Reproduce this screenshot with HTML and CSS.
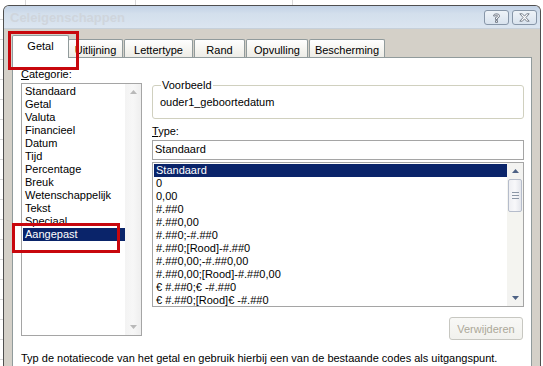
FILE: index.html
```html
<!DOCTYPE html>
<html>
<head>
<meta charset="utf-8">
<link rel="stylesheet" href="styles.css">
</head>
<body>
<div class="desk">
  <div class="win">
    <div class="titlebar">
      <span class="title">Celeigenschappen</span>
      <div class="tbtns">
        <span class="tbtn">
          <svg width="9" height="10" viewBox="0 0 9 10"><path d="M1.5 3 Q1.5 0.8 4.5 0.8 Q7.5 0.8 7.5 3 Q7.5 4.5 5.5 5.2 L5.5 6.5 L3.5 6.5 L3.5 4.6 Q5.5 4 5.5 3 Q5.5 2.2 4.5 2.2 Q3.5 2.2 3.5 3 Z M3.5 7.6 H5.5 V9.4 H3.5 Z" fill="#fff" stroke="#6a7380" stroke-width="0.9"/></svg>
        </span>
        <span class="tbtn">
          <svg width="11" height="9" viewBox="0 0 11 9"><path d="M0.8 0.8 H3.4 L5.5 3.2 L7.6 0.8 H10.2 L6.9 4.5 L10.2 8.2 H7.6 L5.5 5.8 L3.4 8.2 H0.8 L4.1 4.5 Z" fill="#fff" stroke="#6a7380" stroke-width="0.9"/></svg>
        </span>
      </div>
    </div>
    <div class="body">
      <div class="tabs">
        <div class="tab active">Getal</div>
        <div class="tab t-uit">Uitlijning</div>
        <div class="tab t-let">Lettertype</div>
        <div class="tab t-ran">Rand</div>
        <div class="tab t-opv">Opvulling</div>
        <div class="tab t-bes">Bescherming</div>
      </div>
      <div class="panel">
        <div class="cols">
          <div class="left">
            <div class="lbl"><u>C</u>ategorie:</div>
            <div class="listbox cat">
              <ul class="items">
                <li>Standaard</li>
                <li>Getal</li>
                <li>Valuta</li>
                <li>Financieel</li>
                <li>Datum</li>
                <li>Tijd</li>
                <li>Percentage</li>
                <li>Breuk</li>
                <li>Wetenschappelijk</li>
                <li>Tekst</li>
                <li>Speciaal</li>
                <li class="sel marked">Aangepast</li>
              </ul>
              <div class="sb off">
                <span class="arrow"><svg width="7" height="4" viewBox="0 0 7 4"><path d="M0 4 L3.5 0 L7 4 Z" fill="#b9b9b9"/></svg></span>
                <span class="track"></span>
                <span class="arrow"><svg width="7" height="4" viewBox="0 0 7 4"><path d="M0 0 L3.5 4 L7 0 Z" fill="#b9b9b9"/></svg></span>
              </div>
            </div>
          </div>
          <div class="right">
            <fieldset class="sample">
              <legend>Voorbeeld</legend>
              <div class="sample-val">ouder1_geboortedatum</div>
            </fieldset>
            <div class="lbl type-lbl"><u>T</u>ype:</div>
            <div class="input">Standaard</div>
            <div class="listbox types">
              <ul class="items">
                <li class="sel">Standaard</li>
                <li>0</li>
                <li>0,00</li>
                <li>#.##0</li>
                <li>#.##0,00</li>
                <li>#.##0;-#.##0</li>
                <li>#.##0;[Rood]-#.##0</li>
                <li>#.##0,00;-#.##0,00</li>
                <li>#.##0,00;[Rood]-#.##0,00</li>
                <li>€ #.##0;€ -#.##0</li>
                <li>€ #.##0;[Rood]€ -#.##0</li>
              </ul>
              <div class="sb on">
                <span class="abtn"><svg width="7" height="4" viewBox="0 0 7 4"><path d="M0 4 L3.5 0 L7 4 Z" fill="#4d6185"/></svg></span>
                <span class="thumb"><i></i><i></i><i></i></span>
                <span class="track"></span>
                <span class="abtn"><svg width="7" height="4" viewBox="0 0 7 4"><path d="M0 0 L3.5 4 L7 0 Z" fill="#4d6185"/></svg></span>
              </div>
            </div>
            <div class="btnrow"><span class="btn">Verwijderen</span></div>
          </div>
        </div>
        <p class="hint">Typ de notatiecode van het getal en gebruik hierbij een van de bestaande codes als uitgangspunt.</p>
      </div>
    </div>
  </div>
</div>
</body>
</html>
```

FILE: styles.css
```css
* { box-sizing: border-box; }
html, body { margin: 0; padding: 0; }
body {
  width: 543px;
  height: 366px;
  overflow: hidden;
  font-family: "Liberation Sans", Arial, sans-serif;
  font-size: 11px;
  color: #000;
  background: #fff;
}
.desk {
  height: 366px;
  padding: 5px 2px 0 3px;
  background:
    linear-gradient(90deg, transparent 25px, #d8d8d8 25px, #d8d8d8 26px, transparent 26px) 0 0 / 543px 5px no-repeat,
    linear-gradient(90deg, transparent 135px, #d8d8d8 135px, #d8d8d8 136px, transparent 136px) 0 0 / 543px 5px no-repeat,
    linear-gradient(90deg, transparent 292px, #d8d8d8 292px, #d8d8d8 293px, transparent 293px) 0 0 / 543px 5px no-repeat,
    repeating-linear-gradient(180deg, transparent 0, transparent 19px, #d8d8d8 19px, #d8d8d8 20px) 0 0 / 3px 366px no-repeat,
    #fff;
}
.win {
  width: 538px;
  height: 361px;
  border: 1px solid #4f4f4f;
  border-bottom: 0;
  border-radius: 6px 6px 0 0;
  background: #d4d0c8;
  overflow: hidden;
}
.titlebar {
  height: 23px;
  display: flex;
  align-items: center;
  justify-content: space-between;
  padding: 0 3px 0 6px;
  background: linear-gradient(180deg, #c2d2e6 0%, #d3dfec 35%, #dbe5f0 100%);
  border-bottom: 1px solid #c6d0da;
}
.title {
  font-family: "Liberation Sans", Arial, sans-serif;
  font-weight: bold;
  font-size: 13px;
  color: #cfd5dc;
  white-space: nowrap;
}
.tbtns { display: flex; gap: 3px; padding-top: 1px; }
.tbtn {
  width: 25px;
  height: 15px;
  border: 1px solid #8796a8;
  border-radius: 3px;
  background: linear-gradient(180deg, #eef3f8, #d9e3ee);
  display: flex;
  align-items: center;
  justify-content: center;
}
.body {
  padding: 0 8px;
}
.tabs {
  display: flex;
  align-items: flex-end;
  height: 28px;
  padding-left: 0;
}
.tab {
  height: 19px;
  margin-bottom: -1px;
  border: 1px solid #919b9c;
  border-bottom: 0;
  border-radius: 2px 2px 0 0;
  background: linear-gradient(180deg, #fefefe 0%, #f4f3ee 60%, #ecebe6 100%);
  display: flex;
  align-items: center;
  justify-content: center;
  padding-top: 1px;
  margin-right: 1px;
  white-space: nowrap;
}
.tab.active {
  position: relative;
  z-index: 2;
  width: 57px;
  height: 23px;
  background: #fff;
  margin-right: -1px;
  padding-bottom: 3px;
}
.tab.active::after {
  content: "";
  position: absolute;
  left: -5px;
  top: -5px;
  width: 65px;
  height: 33px;
  border: 3px solid #c8070d;
}
.t-uit { width: 55px; }
.t-let { width: 69px; }
.t-ran { width: 51px; }
.t-opv { width: 62px; }
.t-bes { width: 76px; }
.panel {
  position: relative;
  z-index: 1;
  width: 520px;
  height: 320px;
  background: #fff;
  border: 1px solid #919b9c;
  border-bottom: 0;
  padding: 10px 7px 0 8px;
}
.cols {
  display: flex;
  gap: 10px;
}
.left { width: 121px; }
.right { width: 372px; padding-top: 11px; }
.lbl { height: 15px; line-height: 13px; }
u { text-decoration: underline; text-underline-offset: 1px; }
.listbox {
  display: flex;
  border: 1px solid #a5a5a5;
  background: #fff;
  padding: 1px 0 1px 1px;
}
.listbox.cat { height: 253px; }
.items {
  list-style: none;
  margin: 0;
  padding: 0;
  flex: 1;
}
.items li {
  height: 13px;
  line-height: 13px;
  padding-left: 2px;
  white-space: nowrap;
}
.items li.sel { background: #0a246a; color: #fff; }
.items li.marked { position: relative; }
.items li.marked::after {
  content: "";
  position: absolute;
  left: -11px;
  top: -5px;
  width: 102px;
  height: 24px;
  border: 3px solid #c8070d;
}
.sb {
  width: 16px;
  display: flex;
  flex-direction: column;
  margin-top: -1px;
  margin-bottom: -1px;
}
.sb.off { background: linear-gradient(90deg, #f3f3f3, #f7f7f7 50%, #eeeeee); }
.sb .arrow {
  height: 16px;
  display: flex;
  align-items: center;
  justify-content: center;
}
.sb .track { flex: 1; }
.sb.on { background: #f4f4f0; }
.sb .abtn {
  height: 16px;
  display: flex;
  align-items: center;
  justify-content: center;
  background: #f3f3f1;
}
.sb .thumb {
  height: 33px;
  margin: 0 1px 0 1px;
  border: 1px solid #b5bccb;
  border-radius: 2px;
  background: linear-gradient(90deg, #eeeff3, #f8f8fa 50%, #e4e6ec);
  display: flex;
  flex-direction: column;
  align-items: center;
  justify-content: center;
  gap: 2px;
}
.sb .thumb i {
  display: block;
  width: 7px;
  height: 1px;
  background: #8c97a6;
}
.sample {
  margin: 0;
  height: 40px;
  border: 1px solid #d0d0bf;
  border-radius: 3px;
  padding: 0 0 0 7px;
}
.sample legend {
  padding: 0 1px;
  margin-left: 1px;
  line-height: 12px;
}
.sample-val { padding-top: 5px; }
.type-lbl { margin-top: 6px; height: 15px; }
.input {
  height: 20px;
  border: 1px solid #a5a5a5;
  padding-left: 2px;
  line-height: 17px;
}
.listbox.types {
  margin-top: 2px;
  height: 145px;
}
.btnrow {
  display: flex;
  justify-content: flex-end;
  padding-right: 1px;
  margin-top: 10px;
}
.btn {
  width: 74px;
  height: 23px;
  border: 1px solid #c7c7c1;
  border-radius: 3px;
  background: linear-gradient(180deg, #f8f8f6, #f1f1ed);
  color: #aca899;
  display: flex;
  align-items: center;
  justify-content: center;
}
.hint {
  margin: 12px 0 0 0;
  line-height: 13px;
  white-space: nowrap;
}
```
